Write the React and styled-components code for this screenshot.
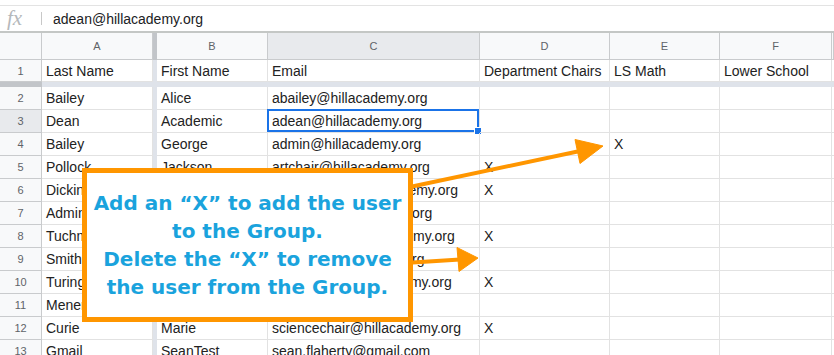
import React from "react";
import styled, { createGlobalStyle } from "styled-components";

const GlobalStyle = createGlobalStyle`
  html, body { margin: 0; padding: 0; background: #fff; }
  body { width: 834px; height: 355px; overflow: hidden; font-family: "Liberation Sans", Arial, sans-serif; }
`;

const COLS = "42px 111px 4px 111px 212px 130px 110px 112px 1fr";

const Page = styled.div`
  position: relative;
  width: 834px;
  height: 355px;
  overflow: hidden;
`;

const FormulaBar = styled.div`
  display: flex;
  align-items: center;
  height: 25px;
  margin-top: 5px;
  border-top: 1px solid #e3e3e3;
  border-bottom: 2px solid #c4c7c5;
`;

const Fx = styled.span`
  width: 42px;
  padding-left: 7px;
  box-sizing: border-box;
  font-family: "Liberation Serif", serif;
  font-style: italic;
  font-size: 21px;
  color: #b5b8bb;
  border-right: 1px solid #c8c8c8;
  line-height: 13px;
  height: 13px;
  display: flex;
  align-items: center;
`;

const FormulaText = styled.span`
  padding-left: 11px;
  font-size: 14px;
  color: #202124;
`;

const Row = styled.div`
  display: grid;
  grid-template-columns: ${COLS};
  height: ${(p) => p.h}px;
`;

const Cell = styled.div`
  box-sizing: border-box;
  border-right: 1px solid #e2e2e2;
  border-bottom: 1px solid #e2e2e2;
  padding-left: 4px;
  font-size: 14px;
  color: #222;
  white-space: nowrap;
  overflow: visible;
  display: flex;
  align-items: center;
  position: relative;
`;

const HeadCell = styled.div`
  box-sizing: border-box;
  background: ${(p) => (p.active ? "#e8eaed" : "#f8f9fa")};
  border-right: 1px solid #c9cbcd;
  border-bottom: 1px solid #c9cbcd;
  font-size: 11px;
  color: #5f6368;
  display: flex;
  align-items: center;
  justify-content: center;
`;

const Freeze = styled.div`
  background: ${(p) => (p.dark ? "#c2c5c9" : "#dfe3ea")};
`;

const Selected = styled.div`
  position: absolute;
  inset: -1px 0 0 -1px;
  border: 2px solid #1a73e8;
  pointer-events: none;
  &::after {
    content: "";
    position: absolute;
    right: -5px;
    bottom: -5px;
    width: 6px;
    height: 6px;
    background: #1a73e8;
    border: 1px solid #fff;
  }
`;

const Overlay = styled.svg`
  position: absolute;
  left: 0;
  top: 0;
  pointer-events: none;
`;

const Callout = styled.div`
  position: absolute;
  left: 82px;
  top: 168px;
  width: 331px;
  height: 154px;
  box-sizing: border-box;
  background: #fff;
  border: 5px solid #ff9600;
  display: flex;
  align-items: center;
  justify-content: center;
  text-align: center;
  font-family: "DejaVu Sans", Verdana, sans-serif;
  font-weight: 700;
  font-size: 20px;
  line-height: 28px;
  color: #1aa3dd;
`;

const letters = ["A", "B", "C", "D", "E", "F"];

const data = [
  ["Bailey", "Alice", "abailey@hillacademy.org", "", "", ""],
  ["Dean", "Academic", "adean@hillacademy.org", "", "", ""],
  ["Bailey", "George", "admin@hillacademy.org", "", "X", ""],
  ["Pollock", "Jackson", "artchair@hillacademy.org", "X", "", ""],
  ["Dickinson", "Emily", "englishchair@hillacademy.org", "X", "", ""],
  ["Admin", "Account", "account@hillacademy.org", "", "", ""],
  ["Tuchman", "Barbara", "historychair@hillacademy.org", "X", "", ""],
  ["Smith", "Adam", "asmith@hillacademy.org", "", "", ""],
  ["Turing", "Alan", "mathschair@hillacademy.org", "X", "", ""],
  ["Menendez", "Lucia", "", "", "", ""],
  ["Curie", "Marie", "sciencechair@hillacademy.org", "X", "", ""],
  ["Gmail", "SeanTest", "sean.flaherty@gmail.com", "", "", ""],
];

const titles = ["Last Name", "First Name", "Email", "Department Chairs", "LS Math", "Lower School"];

function DataRow({ num, values, h = 23, selectedCol, freezeDark }) {
  return (
    <Row h={h}>
      <HeadCell active={selectedCol !== undefined}>{num}</HeadCell>
      <Cell>{values[0]}</Cell>
      <Freeze dark={freezeDark} />
      {values.slice(1).map((v, i) => (
        <Cell key={i}>
          {v}
          {selectedCol === i + 1 && <Selected />}
        </Cell>
      ))}
      <Cell />
    </Row>
  );
}

export default function App() {
  return (
    <Page>
      <GlobalStyle />
      <FormulaBar>
        <Fx>fx</Fx>
        <FormulaText>adean@hillacademy.org</FormulaText>
      </FormulaBar>
      <Row h={27}>
        <HeadCell />
        <HeadCell>A</HeadCell>
        <Freeze dark />
        {letters.slice(1).map((l) => (
          <HeadCell key={l} active={l === "C"}>{l}</HeadCell>
        ))}
        <HeadCell />
      </Row>
      <DataRow num={1} values={titles} h={22} />
      <Row h={5}>
        <Freeze dark />
        <Freeze />
        <Freeze />
        <Freeze />
        <Freeze />
        <Freeze />
        <Freeze />
        <Freeze />
        <Freeze />
      </Row>
      {data.map((r, i) => (
        <DataRow key={i} num={i + 2} values={r} selectedCol={i === 1 ? 2 : undefined} />
      ))}

      <Overlay width="834" height="355" viewBox="0 0 834 355">
        <g fill="#ff9600" stroke="#ff9600">
          <line x1="405" y1="188" x2="580" y2="151" strokeWidth="4" />
          <polygon points="603,146 580,163.5 575,139.5" strokeWidth="1" />
          <line x1="405" y1="263" x2="460" y2="259.5" strokeWidth="4" />
          <polygon points="478,258 459,271.5 457,247.5" strokeWidth="1" />
        </g>
      </Overlay>

      <Callout>
        <div>
          Add an “X” to add the user
          <br />
          to the Group.
          <br />
          Delete the “X” to remove
          <br />
          the user from the Group.
        </div>
      </Callout>
    </Page>
  );
}
